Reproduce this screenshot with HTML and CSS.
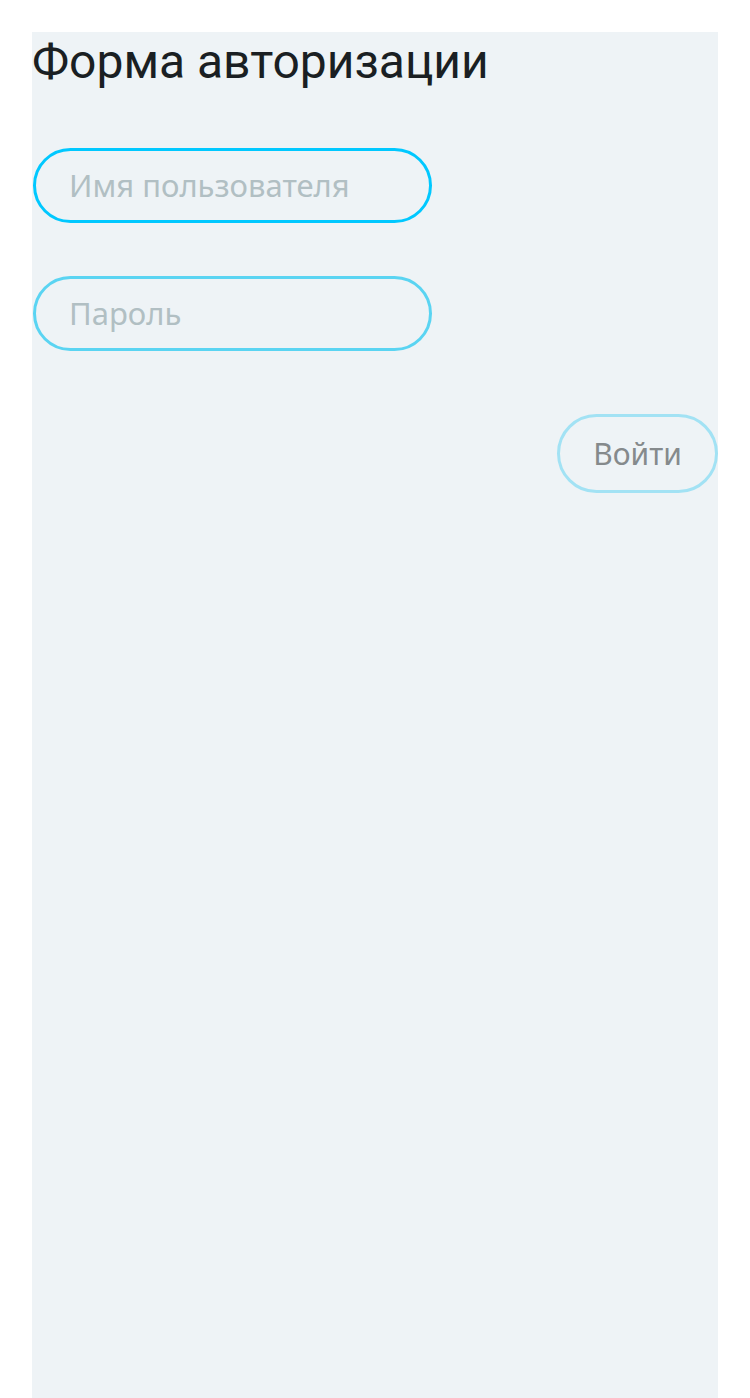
FILE: index.html
```html
<!DOCTYPE html>
<html lang="ru">
<head>
<meta charset="utf-8">
<title>Форма авторизации</title>
<link rel="stylesheet" href="styles.css">
</head>
<body>
<main class="panel">
  <h1 class="title">Форма авторизации</h1>
  <form class="form">
    <input class="field field-user" type="text" placeholder="Имя пользователя">
    <input class="field field-pass" type="password" placeholder="Пароль">
    <div class="actions">
      <button class="btn" type="button">Войти</button>
    </div>
  </form>
</main>
</body>
</html>
```

FILE: styles.css
```css
html, body {
  margin: 0;
  padding: 0;
  background: #ffffff;
}

.panel {
  margin: 32px 32px 0 32px;
  min-height: 1366px;
  background: #eef3f6;
  box-sizing: border-box;
}

.title {
  margin: 0;
  font-family: Roboto, "Liberation Sans", sans-serif;
  font-weight: 400;
  font-size: 48px;
  line-height: 60px;
  color: #1a1f23;
}

.form {
  display: flex;
  flex-direction: column;
  padding-top: 56px;
}

.field {
  box-sizing: border-box;
  width: 399px;
  height: 75px;
  margin: 0 0 0 1px;
  padding: 0 0 2px 33px;
  border: 3px solid #00c8ff;
  border-radius: 38px;
  background: transparent;
  font-family: "Noto Sans", "Open Sans", sans-serif;
  font-size: 31px;
  color: #333;
  outline: none;
}

.field::placeholder {
  color: #b1bfc3;
}

.field-pass {
  margin-top: 53px;
  border-color: #5ad4f2;
}

.actions {
  display: flex;
  justify-content: flex-end;
  padding-top: 63px;
}

.btn {
  box-sizing: border-box;
  width: 161px;
  height: 79px;
  border: 3px solid #a2e2f4;
  border-radius: 40px;
  background: transparent;
  font-family: "Noto Sans", "Open Sans", sans-serif;
  font-size: 30px;
  color: #858a8c;
  padding: 0;
  cursor: pointer;
}
```
